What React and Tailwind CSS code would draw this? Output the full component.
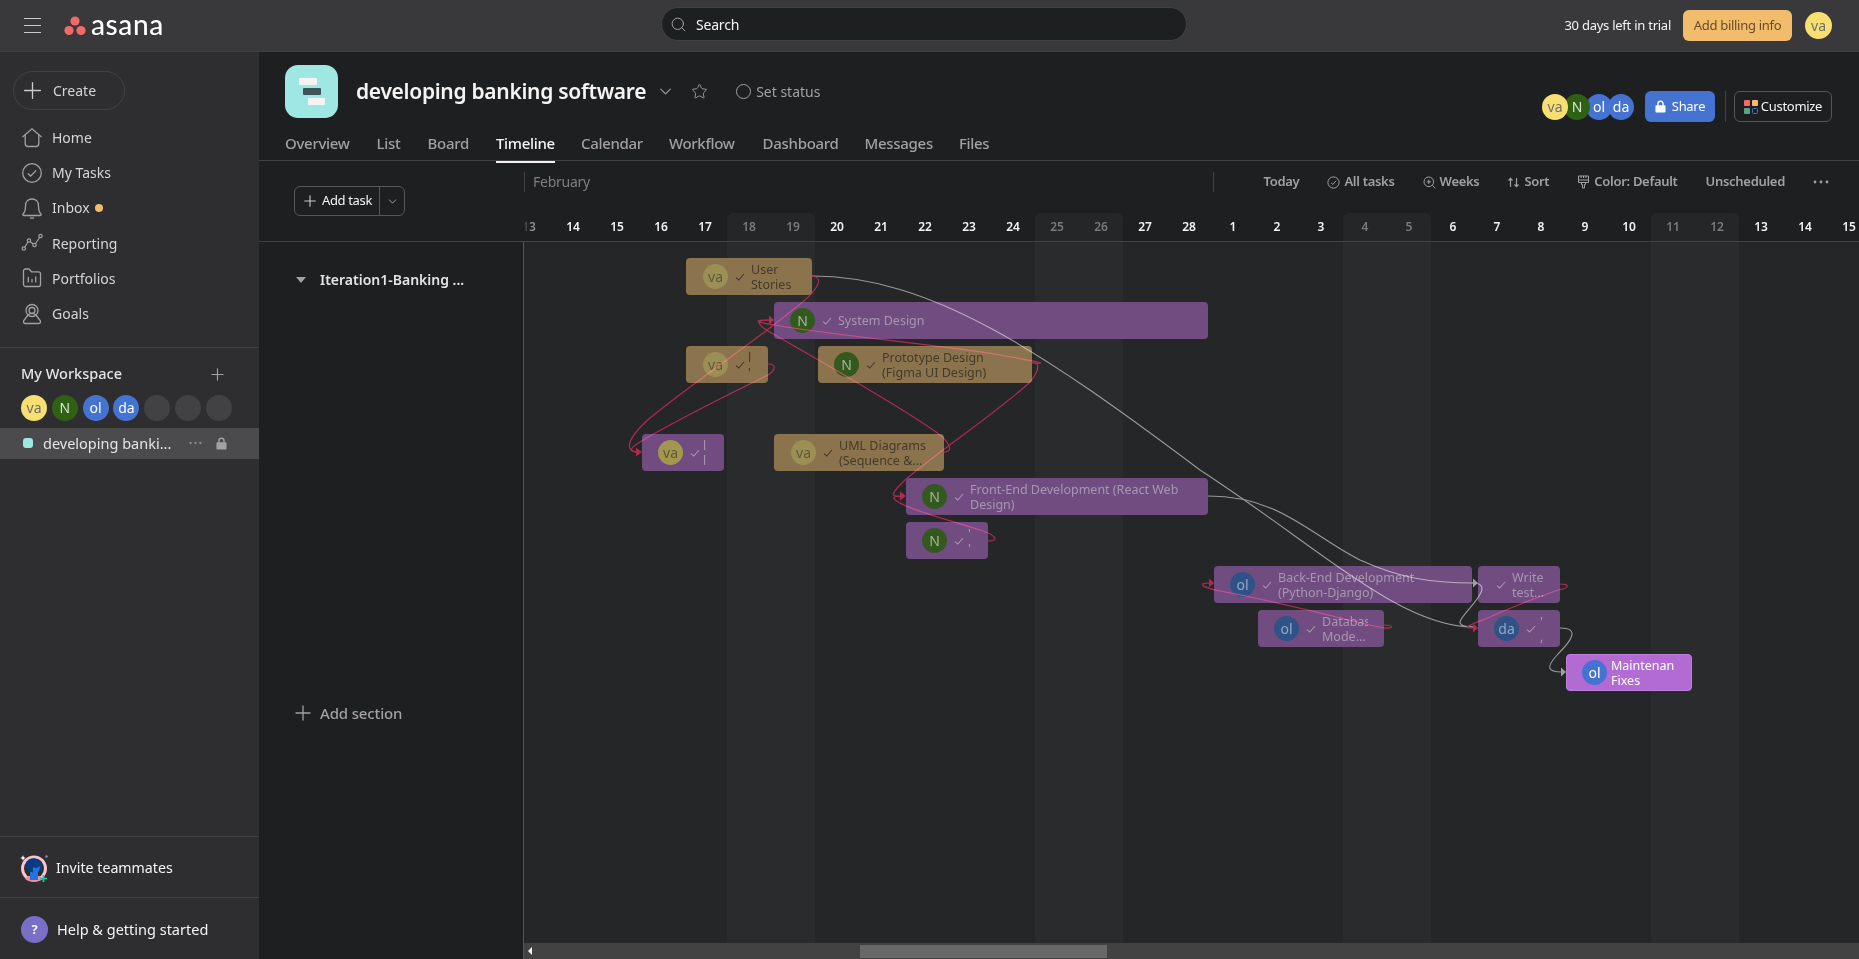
import React from "react";
import { ChevronDown, Plus, Search, Star } from "lucide-react";

const days = [13, 14, 15, 16, 17, 18, 19, 20, 21, 22, 23, 24, 25, 26, 27, 28, 1, 2, 3, 4, 5, 6, 7, 8, 9, 10, 11, 12, 13, 14, 15];
const weekend = [5, 6, 12, 13, 19, 20, 26, 27];

const tabs = [
  { name: "Overview", ml: "ml-0" },
  { name: "List", ml: "ml-[27px]" },
  { name: "Board", ml: "ml-[27px]" },
  { name: "Timeline", ml: "ml-[27px]", active: true },
  { name: "Calendar", ml: "ml-[26px]" },
  { name: "Workflow", ml: "ml-[26px]" },
  { name: "Dashboard", ml: "ml-[28px]" },
  { name: "Messages", ml: "ml-[26px]" },
  { name: "Files", ml: "ml-[26px]" },
];

const avatarColors = {
  va: "bg-[#f8df72] text-[#6d6e6f]",
  N: "bg-[#2f6114] text-[#d7e6cc]",
  ol: "bg-[#4573d2] text-white",
  da: "bg-[#4573d2] text-white",
};

const barAvatarColors = {
  va: "bg-[#9c8f55] text-[#5f5836]",
  vaP: "bg-[#a3974f] text-[#5f5836]",
  N: "bg-[#33591f] text-[#a3b598]",
  ol: "bg-[#2f5387] text-[#92a8c6]",
  da: "bg-[#2f5387] text-[#92a8c6]",
  olB: "bg-[#4573d2] text-white",
};

const bars = [
  { x: 686, y: 258, w: 126, kind: "tan", av: "va", avKey: "va", pad: 17, lines: ["User", "Stories"], tw: 56 },
  { x: 774, y: 302, w: 434, kind: "purple", av: "N", avKey: "N", pad: 16, lines: ["System Design"], tw: 300 },
  { x: 686, y: 346, w: 82, kind: "tan", av: "va", avKey: "va", pad: 17, lines: ["l", "'"], tw: 6, gap: 3 },
  { x: 818, y: 346, w: 214, kind: "tan", av: "N", avKey: "N", pad: 16, lines: ["Prototype Design", "(Figma UI Design)"], tw: 150 },
  { x: 642, y: 434, w: 82, kind: "purple", av: "va", avKey: "vaP", pad: 16, lines: ["l", "l"], tw: 6, gap: 3 },
  { x: 774, y: 434, w: 170, kind: "tan", av: "va", avKey: "va", pad: 17, lines: ["UML Diagrams", "(Sequence &..."], tw: 105 },
  { x: 906, y: 478, w: 302, kind: "purple", av: "N", avKey: "N", pad: 16, lines: ["Front-End Development (React Web", "Design)"], tw: 235 },
  { x: 906, y: 522, w: 82, kind: "purple", av: "N", avKey: "N", pad: 16, lines: ["'", "'"], tw: 6, gap: 4 },
  { x: 1214, y: 566, w: 258, kind: "purple", av: "ol", avKey: "ol", pad: 16, lines: ["Back-End Development", "(Python-Django)"], tw: 190 },
  { x: 1258, y: 610, w: 126, kind: "purple", av: "ol", avKey: "ol", pad: 16, lines: ["Database", "Mode..."], tw: 46 },
  { x: 1478, y: 566, w: 82, kind: "purple", pad: 11, lines: ["Write", "test..."], tw: 40 },
  { x: 1478, y: 610, w: 82, kind: "purple", av: "da", avKey: "da", pad: 16, lines: ["'", ","], tw: 6, gap: 4 },
  { x: 1566, y: 654, w: 126, kind: "bright", av: "ol", avKey: "olB", pad: 15, lines: ["Maintenance", "Fixes"], tw: 64 },
];

const barStyles = {
  tan: "bg-[#8b734d] text-[#443b2b]",
  purple: "bg-[#704c80] text-[#a896b0]",
  bright: "bg-[#b36bd4] text-white border border-[#bd7fd9]",
};

const redLines = [
  "M812 276 C826 278 817 292 790 312 C750 345 690 385 650 418 C625 440 625 452 638 452",
  "M768 364 C778 364 776 372 762 378 C730 394 680 418 640 442 C628 449 630 452 638 452",
  "M1032 363 C1050 364 1040 362 1000 355 C940 345 830 335 775 325 C752 322 755 320 770 320",
  "M944 452 C954 452 950 442 936 432 C905 410 810 355 775 335 C755 324 755 320 770 320",
  "M1032 362 C1040 362 1040 370 1030 382 C1000 410 940 450 905 480 C888 496 892 497 902 496",
  "M988 541 C1000 541 996 535 980 530 C950 520 915 512 898 502 C890 497 895 496 902 496",
  "M1384 625 C1394 625 1394 629 1384 628 C1360 624 1300 606 1220 591 C1200 587 1198 583 1210 583",
  "M1560 584 C1570 584 1570 588 1558 590 C1530 600 1510 608 1490 617 C1470 625 1460 628 1474 628",
];

const greyLines = [
  "M812 276 C930 276 1040 350 1200 470 C1320 548 1400 627 1474 627",
  "M1208 496 C1280 496 1310 535 1360 560 C1400 578 1430 583 1474 583",
  "M1472 583 C1500 583 1460 615 1460 622 C1460 627 1470 627 1474 627",
  "M1560 628 C1580 628 1572 640 1558 654 C1545 668 1548 672 1562 672",
];

const HomeIcon = () => (
  <svg width="22" height="22" viewBox="0 0 22 22" fill="none" stroke="#a2a0a2" strokeWidth="1.3">
    <path d="M1.5 10 L11 1.8 L20.5 10" />
    <path d="M4.2 8 V16.5 a3 3 0 0 0 3 3 H14.8 a3 3 0 0 0 3-3 V8" />
  </svg>
);
const TasksIcon = () => (
  <svg width="22" height="22" viewBox="0 0 22 22" fill="none" stroke="#a2a0a2" strokeWidth="1.3">
    <circle cx="11" cy="11" r="9.3" />
    <path d="M6.8 11.4 L9.7 14 L15.2 8.4" />
  </svg>
);
const BellIcon = () => (
  <svg width="22" height="22" viewBox="0 0 22 22" fill="none" stroke="#a2a0a2" strokeWidth="1.3">
    <path d="M2 17 C4 15 4.5 13 4.5 9 C4.5 4.5 7.5 2 11 2 C14.5 2 17.5 4.5 17.5 9 C17.5 13 18 15 20 17 C20.5 18 20 18.5 19 18.5 H3 C2 18.5 1.5 18 2 17 Z" />
    <path d="M9 21 H13" />
  </svg>
);
const ReportingIcon = () => (
  <svg width="22" height="22" viewBox="0 0 22 22" fill="none" stroke="#a2a0a2" strokeWidth="1.2">
    <circle cx="2.8" cy="16.5" r="1.7" />
    <circle cx="8" cy="8.5" r="1.7" />
    <circle cx="13.5" cy="13" r="1.7" />
    <circle cx="19.5" cy="4" r="1.7" />
    <path d="M3.8 15 L7 10 M9.2 9.7 L12.3 12 M14.5 11.5 L18.6 5.5" />
  </svg>
);
const PortfolioIcon = () => (
  <svg width="22" height="22" viewBox="0 0 22 22" fill="none" stroke="#a2a0a2" strokeWidth="1.3">
    <path d="M2.5 4 a2 2 0 0 1 2-2 H8 L10.5 4.8 H17.5 a2 2 0 0 1 2 2 V17.5 a2 2 0 0 1-2 2 H4.5 a2 2 0 0 1-2-2 Z" />
    <path d="M7.3 10 V15.5 M11 12 V15.5 M14.7 9.5 V15.5" />
  </svg>
);
const GoalsIcon = () => (
  <svg width="22" height="22" viewBox="0 0 22 22" fill="none" stroke="#a2a0a2" strokeWidth="1.3">
    <circle cx="11" cy="7.5" r="6" />
    <circle cx="11" cy="7.5" r="3" />
    <path d="M7 12 L2.8 17.5 C2 19 2.8 20.5 4.5 20.5 H17.5 C19.2 20.5 20 19 19.2 17.5 L15 12 C12.5 10 9.5 10 7 12 Z" />
  </svg>
);
const LockIcon = ({ className }) => (
  <svg className={className} viewBox="0 0 12 14" fill="currentColor">
    <path d="M2.5 5.5 V4 a3.5 3.5 0 0 1 7 0 V5.5 H10.5 a1 1 0 0 1 1 1 V12.5 a1 1 0 0 1-1 1 H1.5 a1 1 0 0 1-1-1 V6.5 a1 1 0 0 1 1-1 Z M4 5.5 H8 V4 a2 2 0 0 0-4 0 Z" fillRule="evenodd" />
  </svg>
);
const Dots = ({ className }) => (
  <svg className={className} viewBox="0 0 16 4" fill="currentColor">
    <circle cx="2" cy="2" r="1.4" />
    <circle cx="8" cy="2" r="1.4" />
    <circle cx="14" cy="2" r="1.4" />
  </svg>
);
const TinyCheck = ({ className }) => (
  <svg className={className} viewBox="0 0 10 10" fill="none" stroke="currentColor" strokeWidth="1.1">
    <path d="M1 5.6 L3.7 8 L9 2" />
  </svg>
);
const InviteIcon = () => (
  <svg width="29" height="29" viewBox="0 0 29 29" className="shrink-0">
    <circle cx="14" cy="14.5" r="13" fill="#f9c3d0" />
    <circle cx="14" cy="14.5" r="10" fill="#2e2e30" />
    <path d="M5 25 C10 29 18 29 23 25 L20 22 H8 Z" fill="#f28b9c" />
    <path d="M10 17 H18 V26 H10 Z" fill="#1f74e0" />
    <path d="M6 12 C5 7 10 3.5 15 4.5 C21 5 24 9 22 14 C20 19 15 21 12 18 C9 18 7 16 6 12 Z" fill="#0d3b82" />
    <path d="M13 13 C15 15 18 14 20 12 C20 17 16 22 13 20 Z" fill="#1f74e0" />
    <path d="M23.5 21 V28 M20 24.5 H27" stroke="#25c9a0" strokeWidth="1.7" />
    <path d="M3 1 L3.8 3.2 L6 4 L3.8 4.8 L3 7 L2.2 4.8 L0 4 L2.2 3.2 Z" fill="#ffffff" />
    <circle cx="26.5" cy="2.5" r="1.2" fill="#8d84e8" />
  </svg>
);

function SmallAvatar({ name, className = "" }) {
  return (
    <div className={`flex h-[26px] w-[26px] items-center justify-center rounded-full text-[14px] ${avatarColors[name]} ${className}`}>
      {name}
    </div>
  );
}

function NavItem({ icon, label, children }) {
  return (
    <div className="flex h-[35.2px] items-center pl-[21px] text-[#d5d4d6]">
      <span className="flex w-[31px] shrink-0">{icon}</span>
      <span className="text-[14px]">{label}</span>
      {children}
    </div>
  );
}

function ToolItem({ icon, label }) {
  return (
    <div className="flex items-center gap-[4px] text-[13px] font-semibold tracking-[-0.3px] text-[#a2a0a2]">
      {icon}
      <span>{label}</span>
    </div>
  );
}

function Bar({ bar }) {
  return (
    <div
      className={`absolute flex h-[37px] items-center overflow-hidden rounded-[4px] ${barStyles[bar.kind]}`}
      style={{ left: bar.x - 524, top: bar.y - 242, width: bar.w, paddingLeft: bar.pad }}
    >
      {bar.av && (
        <div className={`flex h-[25px] w-[25px] shrink-0 items-center justify-center rounded-full text-[14px] ${barAvatarColors[bar.avKey]}`}>
          {bar.av}
        </div>
      )}
      {bar.kind !== "bright" && <TinyCheck className="ml-[7px] h-[10px] w-[10px] shrink-0" />}
      <div
        className="overflow-hidden whitespace-nowrap text-[12.5px] leading-[15px]"
        style={{ width: bar.tw, marginLeft: bar.kind === "bright" ? 4 : bar.gap ?? 6 }}
      >
        {bar.lines.map((line, i) => (
          <div key={i}>{line}</div>
        ))}
      </div>
    </div>
  );
}

export default function App() {
  return (
    <div className="flex h-screen w-full flex-col overflow-hidden bg-[#1e1f21] font-['Noto_Sans',sans-serif] text-[#f5f4f3]">
      {/* Top bar */}
      <header className="flex h-[52px] shrink-0 items-center border-b border-[#424244] bg-[#39393b]">
        <div className="flex w-[661px] items-center pl-[24px]">
          <div className="flex w-[17px] flex-col gap-[6px]">
            <div className="h-px bg-[#c9c9ca]" />
            <div className="h-px bg-[#c9c9ca]" />
            <div className="h-px bg-[#c9c9ca]" />
          </div>
          <svg width="22" height="20" viewBox="0 0 22 20" className="ml-[23px]">
            <circle cx="11" cy="5" r="4.6" fill="#f06a6a" />
            <circle cx="5" cy="14.5" r="4.6" fill="#f06a6a" />
            <circle cx="17" cy="14.5" r="4.6" fill="#f06a6a" />
          </svg>
          <span className="ml-[5px] -mt-[3px] font-['Lato',sans-serif] text-[28px] font-medium leading-none tracking-[0.6px] text-white">asana</span>
        </div>
        <div className="-mt-[3px] flex h-[34px] w-[526px] items-center rounded-full border border-[#424244] bg-[#1e1f21] pl-[8px]">
          <Search size={17} strokeWidth={1.4} className="text-[#a2a0a2]" />
          <span className="ml-[9px] text-[14px] tracking-[-0.2px]">Search</span>
        </div>
        <div className="flex flex-1 items-center justify-end pr-[27px]">
          <span className="text-[13px] tracking-[-0.25px]">30 days left in trial</span>
          <div className="ml-[12px] flex h-[31px] w-[109px] items-center justify-center rounded-[6px] bg-[#f1bd6c] text-[13px] tracking-[-0.3px] text-[#6b4a24]">
            Add billing info
          </div>
          <SmallAvatar name="va" className="ml-[13px] h-[27px] w-[27px]" />
        </div>
      </header>

      <div className="flex min-h-0 flex-1">
        {/* Sidebar */}
        <aside className="flex w-[259px] shrink-0 flex-col bg-[#2e2e30]">
          <div className="px-[13px] pt-[19px]">
            <div className="flex h-[39px] w-[112px] items-center rounded-full border border-[#424244] pl-[5px]">
              <Plus size={27} strokeWidth={1.2} className="text-[#c9c9ca]" />
              <span className="ml-[7px] text-[14px] text-[#d5d4d6]">Create</span>
            </div>
          </div>
          <nav className="mt-[10px]">
            <NavItem icon={<HomeIcon />} label="Home" />
            <NavItem icon={<TasksIcon />} label="My Tasks" />
            <NavItem icon={<BellIcon />} label="Inbox">
              <span className="ml-[5px] h-[8px] w-[8px] rounded-full bg-[#f1bd6c]" />
            </NavItem>
            <NavItem icon={<ReportingIcon />} label="Reporting" />
            <NavItem icon={<PortfolioIcon />} label="Portfolios" />
            <NavItem icon={<GoalsIcon />} label="Goals" />
          </nav>
          <div className="mt-[16px] border-t border-[#424244] pt-[15px]">
            <div className="flex items-center justify-between pl-[21px] pr-[32px]">
              <span className="text-[14.5px] font-medium text-[#e5e4e5]">My Workspace</span>
              <Plus size={19} strokeWidth={1.5} className="text-[#a2a0a2]" />
            </div>
            <div className="mt-[10px] flex gap-[4.8px] pl-[21px]">
              <SmallAvatar name="va" />
              <SmallAvatar name="N" />
              <SmallAvatar name="ol" />
              <SmallAvatar name="da" />
              <div className="h-[26px] w-[26px] rounded-full bg-[#424244]" />
              <div className="h-[26px] w-[26px] rounded-full bg-[#424244]" />
              <div className="h-[26px] w-[26px] rounded-full bg-[#424244]" />
            </div>
            <div className="mt-[7px] flex h-[31px] items-center bg-[#4b4b4d] pl-[23px] pr-[32px]">
              <span className="h-[10px] w-[10px] rounded-[3px] bg-[#9ee7e3]" />
              <span className="ml-[10px] text-[14.5px] text-[#e5e4e5]">developing banki...</span>
              <Dots className="ml-auto h-[4px] w-[13px] text-[#8d8c8e]" />
              <LockIcon className="ml-[14px] h-[13px] w-[11px] text-[#a2a0a2]" />
            </div>
          </div>
          <div className="mt-auto">
            <div className="flex h-[61px] items-center gap-[7px] border-t border-[#424244] pl-[20px] pt-[2px]">
              <InviteIcon />
              <span className="text-[14.2px]">Invite teammates</span>
            </div>
            <div className="flex h-[62px] items-center gap-[9px] border-t border-[#424244] pl-[21px] pt-[2px]">
              <div className="flex h-[27px] w-[27px] items-center justify-center rounded-full bg-[#7a6fc7] text-[13px] font-bold">?</div>
              <span className="text-[14.5px]">Help &amp; getting started</span>
            </div>
          </div>
        </aside>

        {/* Main */}
        <main className="flex min-w-0 flex-1 flex-col">
          <div className="h-[109px] shrink-0 border-b border-[#424244] pl-[26px] pr-[27px]">
            <div className="flex h-[66px] items-end">
              <svg width="53" height="53" viewBox="0 0 53 53" className="shrink-0">
                <rect width="53" height="53" rx="13" fill="#9ee7e3" />
                <rect x="14" y="13" width="18" height="7" rx="1" fill="#f5f4f3" />
                <rect x="18" y="23" width="18" height="7" rx="1" fill="#3d5459" />
                <rect x="23" y="33" width="17" height="7" rx="1" fill="#f5f4f3" />
              </svg>
              <div className="ml-[18px] flex h-[53px] flex-1 items-center">
                <h1 className="text-[21px] font-semibold tracking-[-0.3px]">developing banking software</h1>
                <ChevronDown size={19} strokeWidth={1.4} className="ml-[10px] text-[#a2a0a2]" />
                <Star size={17} strokeWidth={1.3} className="ml-[16px] text-[#a2a0a2]" />
                <span className="ml-[28px] h-[15px] w-[15px] rounded-full border border-[#a2a0a2]" />
                <span className="ml-[5px] text-[14px] text-[#a2a0a2]">Set status</span>
                <div className="-mb-[4px] ml-auto flex items-center self-end">
                  <div className="flex">
                    <SmallAvatar name="va" className="relative z-30" />
                    <SmallAvatar name="N" className="relative z-20 -ml-[4px]" />
                    <SmallAvatar name="ol" className="relative z-10 -ml-[4px]" />
                    <SmallAvatar name="da" className="-ml-[4px]" />
                  </div>
                  <div className="ml-[11px] flex h-[31px] w-[70px] items-center justify-center gap-[6px] rounded-[6px] bg-[#4573d2] text-[13px] tracking-[-0.3px] text-white">
                    <LockIcon className="h-[13px] w-[11px]" />
                    Share
                  </div>
                  <div className="ml-[10px] h-[31px] w-px bg-[#424244]" />
                  <div className="ml-[8px] flex h-[31px] w-[98px] items-center justify-center gap-[3px] rounded-[6px] border border-[#565557] text-[13px] tracking-[-0.3px]">
                    <svg width="14" height="14" viewBox="0 0 14 14">
                      <rect x="0" y="0" width="6" height="6" rx="1" fill="#f06a6a" />
                      <rect x="8" y="0" width="6" height="6" rx="1" fill="#f1bd6c" />
                      <rect x="0" y="8" width="6" height="6" rx="1" fill="#5da283" />
                      <rect x="8.5" y="8.5" width="5" height="5" rx="1" fill="none" stroke="#4573d2" />
                    </svg>
                    Customize
                  </div>
                </div>
              </div>
            </div>
            <div className="mt-[14px] flex text-[15px] font-medium leading-[22px] tracking-[-0.3px] text-[#a2a0a2]">
              {tabs.map((tab) => (
                <div key={tab.name} className={`relative ${tab.ml} ${tab.active ? "text-[#f5f4f3]" : ""}`}>
                  {tab.name}
                  {tab.active && <div className="absolute -bottom-[9px] left-0 right-0 h-[2px] bg-[#f5f4f3]" />}
                </div>
              ))}
            </div>
          </div>

          {/* Timeline header */}
          <div className="flex h-[81px] shrink-0 border-b border-[#424244]">
            <div className="w-[264px] shrink-0 pl-[35px] pt-[25px]">
              <div className="flex h-[30px] w-[111px] items-center rounded-[6px] border border-[#565557]">
                <div className="flex h-full flex-1 items-center border-r border-[#565557] pl-[6px]">
                  <Plus size={18} strokeWidth={1.5} className="text-[#c9c9ca]" />
                  <span className="ml-[3px] text-[13px] tracking-[-0.35px]">Add task</span>
                </div>
                <div className="flex w-[24px] justify-center">
                  <ChevronDown size={13} strokeWidth={1.8} className="text-[#a2a0a2]" />
                </div>
              </div>
            </div>
            <div className="relative flex min-w-0 flex-1 flex-col overflow-hidden">
              <div className="flex h-[42px] shrink-0 items-center pl-px pr-[30px]">
                <div className="h-[20px] w-px bg-[#424244]" />
                <span className="-mt-[1px] ml-[8px] text-[14px] tracking-[-0.25px] text-[#7f7f81]">February</span>
                <div className="ml-auto h-[20px] w-px bg-[#424244]" />
                <div className="ml-[50px] flex items-center gap-[28px]">
                  <ToolItem label="Today" />
                  <ToolItem
                    label="All tasks"
                    icon={
                      <svg width="13" height="13" viewBox="0 0 13 13" fill="none" stroke="#a2a0a2" strokeWidth="1">
                        <circle cx="6.5" cy="6.5" r="5.6" />
                        <path d="M4 6.7 L5.8 8.4 L9 4.9" />
                      </svg>
                    }
                  />
                  <ToolItem
                    label="Weeks"
                    icon={
                      <svg width="13" height="13" viewBox="0 0 13 13" fill="none" stroke="#a2a0a2" strokeWidth="1">
                        <circle cx="5.8" cy="5.8" r="4.8" />
                        <path d="M9.3 9.3 L12.2 12.2 M3.6 5.8 H8 M5.8 3.6 V8" />
                      </svg>
                    }
                  />
                  <ToolItem
                    label="Sort"
                    icon={
                      <svg width="13" height="13" viewBox="0 0 13 13" fill="none" stroke="#a2a0a2" strokeWidth="1.2">
                        <path d="M3.5 11 V2.5 M1.5 4.5 L3.5 2.3 L5.5 4.5 M9.5 2 V10.5 M7.5 8.5 L9.5 10.7 L11.5 8.5" />
                      </svg>
                    }
                  />
                  <ToolItem
                    label="Color: Default"
                    icon={
                      <svg width="13" height="14" viewBox="0 0 13 14" fill="none" stroke="#a2a0a2" strokeWidth="1">
                        <path d="M1.5 1 H11.5 V5 H1.5 Z M1.5 5 V7.5 H11.5 V5 M4.5 7.5 V9.5 H5.5 V13 H7.5 V9.5 H8.5 V7.5 M4 1 V3 M6.5 1 V3 M9 1 V3" />
                      </svg>
                    }
                  />
                  <ToolItem label="Unscheduled" />
                  <Dots className="h-[4px] w-[16px] text-[#a2a0a2]" />
                </div>
              </div>
              <div className="mt-[10px] flex h-[28px] shrink-0 -ml-[16px]">
                {days.map((day, i) => (
                  <div
                    key={i}
                    className={`flex w-[44px] shrink-0 items-center justify-center text-[12px] font-semibold ${
                      i === 0
                        ? "text-[#8d8c8e]"
                        : weekend.includes(i)
                          ? `bg-[#252628] font-normal text-[#7a7a7c] ${weekend.indexOf(i) % 2 === 0 ? "rounded-tl-[6px]" : "rounded-tr-[6px]"}`
                          : "text-[#f5f4f3]"
                    }`}
                  >
                    {day}
                  </div>
                ))}
              </div>
              {/* the first date fades under the frozen column */}
              <div className="absolute bottom-0 left-0 h-[28px] w-[8px] bg-gradient-to-r from-[#1e1f21] to-transparent" />
            </div>
          </div>

          {/* Timeline body */}
          <div className="flex min-h-0 flex-1">
            <div className="relative w-[264px] shrink-0">
              <div className="flex items-center pl-[37px] pt-[27px]">
                <svg width="10" height="6" viewBox="0 0 10 6">
                  <path d="M0 0 H10 L5 6 Z" fill="#a2a0a2" />
                </svg>
                <span className="ml-[14px] text-[14px] font-semibold text-[#e5e4e5]">Iteration1-Banking ...</span>
              </div>
              <div className="mt-[411px] flex items-center pl-[32px] text-[#a2a0a2]">
                <Plus size={24} strokeWidth={1.3} />
                <span className="ml-[5px] text-[15px] font-medium tracking-[-0.15px]">Add section</span>
              </div>
            </div>
            <div className="flex min-w-0 flex-1 flex-col border-l border-[#565557]">
              <div className="relative min-h-0 flex-1 overflow-hidden bg-[#252628]">
                <div className="flex h-full -ml-[17px]">
                  {days.map((day, i) => (
                    <div key={i} className={`h-full w-[44px] shrink-0 ${weekend.includes(i) ? "bg-[#2a2b2d]" : ""}`} />
                  ))}
                </div>
                {bars.map((bar) => (
                  <Bar key={`${bar.x}-${bar.y}`} bar={bar} />
                ))}
                <svg className="pointer-events-none absolute left-0 top-0 mix-blend-screen" width="1335" height="701" viewBox="524 242 1335 701" fill="none">
                  {greyLines.map((d) => (
                    <path key={d} d={d} stroke="#878787" strokeWidth="1.1" />
                  ))}
                  <path d="M1473 578.5 L1478 583 L1473 587.5 Z" fill="#8f8f8f" />
                  <path d="M1561 667.5 L1566 672 L1561 676.5 Z" fill="#8f8f8f" />
                  {redLines.map((d) => (
                    <path key={d} d={d} stroke="#a2052f" strokeWidth="1.2" />
                  ))}
                  <path d="M636 447.5 L642 452 L636 456.5 Z" fill="#a2052f" />
                  <path d="M769 315.5 L774 320 L769 324.5 Z" fill="#a2052f" />
                  <path d="M900 491.5 L906 496 L900 500.5 Z" fill="#a2052f" />
                  <path d="M1209 578.5 L1214 583 L1209 587.5 Z" fill="#a2052f" />
                  <path d="M1473 623.5 L1478 628 L1473 632.5 Z" fill="#a2052f" />
                </svg>
              </div>
              <div className="relative flex h-[16px] shrink-0 items-center bg-[#424242] pl-[4px]">
                <svg width="5" height="8" viewBox="0 0 5 8">
                  <path d="M4 0 V8 L0 4 Z" fill="#f5f4f3" />
                </svg>
                <div className="absolute bottom-[1px] left-[336px] top-[2px] w-[247px] bg-[#686868]" />
              </div>
            </div>
          </div>
        </main>
      </div>
    </div>
  );
}
